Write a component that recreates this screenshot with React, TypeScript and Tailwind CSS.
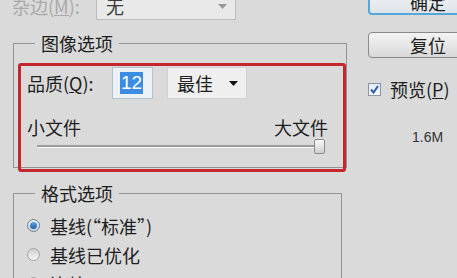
import React from "react";

const font = { fontFamily: '"Noto Sans CJK SC", "Noto Sans", sans-serif' };

function Radio({ checked }: { checked: boolean }) {
  return checked ? (
    <div className="w-[13px] h-[13px] rounded-full border border-[#6f7f90] bg-gradient-to-b from-[#e8eef4] to-[#c9d3dc] flex items-center justify-center shrink-0">
      <div className="w-[7px] h-[7px] rounded-full bg-gradient-to-b from-[#5fa4e6] to-[#1d5fa8]" />
    </div>
  ) : (
    <div className="w-[13px] h-[13px] rounded-full border border-[#a5a5a5] bg-gradient-to-b from-[#cfcfcf] to-[#f6f6f6] shrink-0" />
  );
}

export default function App() {
  return (
    <div
      className="w-[457px] h-[278px] overflow-hidden bg-[#dadada] flex text-[#1e1e1e]"
      style={font}
    >
      {/* Left column */}
      <div className="w-[368px] shrink-0 pl-[13px]">
        {/* Top row (matte) */}
        <div className="-mt-[8px] h-[28px] flex items-center">
          <div className="w-[84px] -ml-[1px] text-[18px] leading-[22px] text-[#a9a9a9]">
            杂边(<span className="underline">M</span>):
          </div>
          <div className="w-[140px] h-[28px] border border-[#bcbcbc] bg-[#e9e9e9] flex items-center pl-[9px] pr-[8px]">
            <span className="flex-1 text-[18px] leading-[22px] text-[#3a3a3a]">无</span>
            <svg width="9" height="5" viewBox="0 0 9 5">
              <path d="M0 0 L9 0 L4.5 5 Z" fill="#9a9a9a" />
            </svg>
          </div>
        </div>

        {/* Image options */}
        <fieldset className="mt-[12px] w-[328px] border border-[#939393]">
          <legend className="ml-[21px] px-[6px] text-[18px] leading-[22px]">图像选项</legend>
          <div className="mt-[9px] ml-[4px] -mb-[5px] w-[328px] border-[3px] border-[#c4262e] rounded-[3px] pt-[1px] pb-[15px]">
            <div className="h-[32px] flex items-center pl-[6px]">
              <div className="w-[85px] text-[18px] leading-[22px]">
                品质(<span className="underline">Q</span>):
              </div>
              <div className="w-[41px] h-[32px] border border-[#b3c2d1] bg-[#eef1f4] flex items-center pl-[7px]">
                <span
                  className="bg-[#3a8de2] text-white text-[19px] leading-[22px] px-[1px]"
                  style={{ fontFamily: '"Liberation Sans", Arial, sans-serif' }}
                >
                  12
                </span>
              </div>
              <div className="ml-[14px] w-[80px] h-[32px] border border-[#d2d2d2] bg-[#efefef] flex items-center pl-[9px] pr-[8px]">
                <span className="flex-1 text-[18px] leading-[22px]">最佳</span>
                <svg width="9" height="5" viewBox="0 0 9 5">
                  <path d="M0 0 L9 0 L4.5 5 Z" fill="#111" />
                </svg>
              </div>
            </div>
            <div className="mt-[17px] h-[22px] flex justify-between pl-[6px] pr-[15px] text-[18px] leading-[22px]">
              <span>小文件</span>
              <span>大文件</span>
            </div>
            <div className="h-[16px] flex items-center pl-[16px] pr-[18px]">
              <div className="flex-1 h-[3px] border-t-[2px] border-[#9c9c9c] border-b border-b-[#f6f6f6]" />
              <div className="-ml-[6px] w-[11px] h-[15px] rounded-[2px] border border-[#8a8a8a] bg-gradient-to-b from-[#fafafa] to-[#cfcfcf]" />
            </div>
          </div>
        </fieldset>

        {/* Format options */}
        <fieldset className="mt-[14px] w-[329px] h-[200px] border border-[#939393]">
          <legend className="ml-[21px] px-[6px] text-[18px] leading-[22px]">格式选项</legend>
          <div className="mt-[7px] pl-[13px] flex flex-col">
            <div className="h-[29px] flex items-center gap-[10px]">
              <Radio checked />
              <span className="text-[18px] leading-[22px]">基线(“标准”)</span>
            </div>
            <div className="h-[29px] flex items-center gap-[10px]">
              <Radio checked={false} />
              <span className="text-[18px] leading-[22px]">基线已优化</span>
            </div>
            <div className="h-[29px] flex items-center gap-[10px]">
              <Radio checked={false} />
              <span className="text-[18px] leading-[22px]">连续</span>
            </div>
          </div>
        </fieldset>
      </div>

      {/* Right column */}
      <div className="flex-1 flex flex-col">
        <div className="-mt-[11px] w-[100px] h-[26px] rounded-[4px] border-2 border-[#55a6da] bg-gradient-to-b from-[#f4f6f8] to-[#dde3e8] flex items-center pl-[40px] text-[18px] leading-[22px]">
          确定
        </div>
        <div className="mt-[17px] w-[100px] h-[26px] rounded-[4px] border border-[#8a8a8a] bg-gradient-to-b from-[#f4f4f4] to-[#d9d9d9] flex items-center pl-[41px] text-[18px] leading-[22px]">
          复位
        </div>
        <div className="mt-[20px] h-[22px] flex items-center">
          <div className="w-[13px] h-[13px] border border-[#8896a6] bg-gradient-to-b from-[#e4e8ed] to-[#fbfbfc] flex items-center justify-center">
            <svg width="11" height="11" viewBox="0 0 11 11">
              <path d="M2 5.5 L4.5 8.5 L9 2" stroke="#2a5fae" strokeWidth="2" fill="none" />
            </svg>
          </div>
          <span className="ml-[9px] text-[18px] leading-[22px]">
            预览(<span className="underline">P</span>)
          </span>
        </div>
        <div
          className="mt-[29px] ml-[44px] h-[16px] text-[14px] leading-[16px] text-[#333]"
          style={{ fontFamily: '"Liberation Sans", Arial, sans-serif' }}
        >
          1.6M
        </div>
      </div>
    </div>
  );
}
